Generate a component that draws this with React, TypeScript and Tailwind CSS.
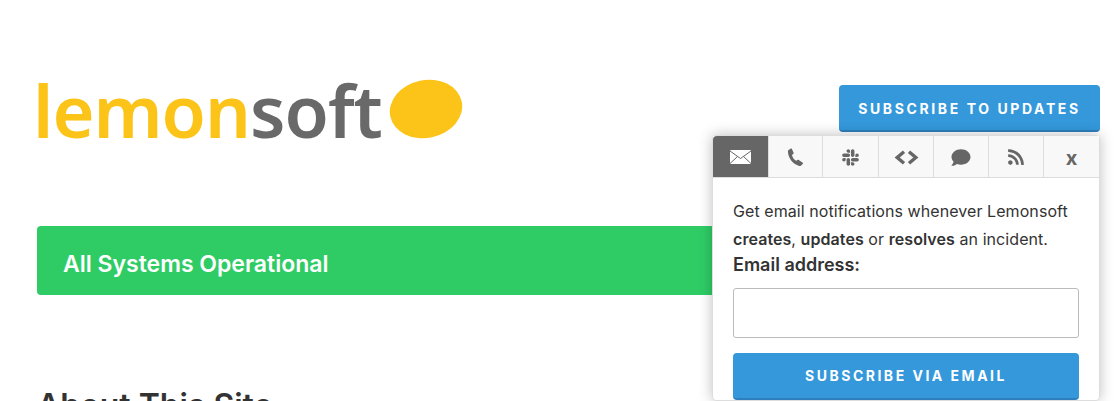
import { FaComment, FaRss, FaSlack } from "react-icons/fa";

const body = "font-['Inter','Liberation_Sans',sans-serif]";

function MailIcon() {
  return (
    <svg width="21" height="14" viewBox="0 0 21 14">
      <rect width="21" height="14" rx="1" fill="#fff" />
      <path d="M0 1l10.5 7.5L21 1M0 13.5l7.5-7M21 13.5l-7.5-7" fill="none" stroke="#666" strokeWidth="1" />
    </svg>
  );
}

function PhoneIcon() {
  return (
    <svg width="17" height="18" viewBox="0 0 17 18">
      <path d="M1 2.5L3.8.6c.4-.3.8-.2 1 .2l1.8 4c.2.4.1.7-.2 1L5 7c.5 2.6 2 4.6 4.2 5.8l1.6-1c.3-.2.7-.2 1 .1l4 2.8c.4.3.4.7.1 1l-2 2c-.3.3-1 .4-1.7.2C6 16.400.4 9.500 1 2.500z" fill="#666" />
    </svg>
  );
}

function CodeIcon() {
  return (
    <svg width="25" height="15" viewBox="0 0 25 15">
      <path d="M10 1.800L3.200 7.500 10 13.200M15 1.800l6.800 5.700L15 13.200" fill="none" stroke="#666" strokeWidth="3.400" />
    </svg>
  );
}

const tabs = [
  { key: "mail", width: "w-[55px]", node: <MailIcon /> },
  { key: "phone", width: "w-[54px]", node: <PhoneIcon /> },
  { key: "slack", width: "w-[56px]", node: <FaSlack className="h-[19px] w-[19px] text-[#666]" /> },
  { key: "code", width: "w-[55px]", node: <CodeIcon /> },
  { key: "chat", width: "w-[55px]", node: <FaComment className="h-[19px] w-[20px] text-[#666]" /> },
  { key: "rss", width: "w-[55px]", node: <FaRss className="h-[18px] w-[18px] text-[#666]" /> },
];

export default function App() {
  return (
    <div className={`relative h-[401px] w-[1117px] overflow-hidden bg-white ${body} text-[#333]`}>
      <div className="pl-[37px] pr-[17px] pt-[85px]">
        <div className="flex h-[47px] items-start justify-between">
          <div className="-ml-[4px] -mt-[23px] flex items-center">
            <span className="font-['Noto_Sans',sans-serif] text-[72px] font-semibold leading-[96px] tracking-[-1px] text-[#fcc419]">
              lemon<span className="text-[#696969]">soft</span>
            </span>
            <svg className="ml-[7px] -mt-[2px]" width="74" height="62" viewBox="0 0 74 62">
              <ellipse cx="37" cy="31" rx="36.500" ry="29" transform="rotate(-12 37 31)" fill="#fcc419" />
            </svg>
          </div>
          <button className="h-[47px] w-[261px] rounded-[4px] border-b-2 border-[#2d7fbd] bg-[#3498db] pt-[1px] text-[14px] font-bold uppercase tracking-[2.6px] text-white">
            Subscribe to Updates
          </button>
        </div>
        <div className="mt-[94px] flex h-[69px] items-center rounded-[4px] bg-[#2fcc66] pl-[26px] pt-[7px] text-[23px] font-semibold text-white">
          All Systems Operational
        </div>
        <h2 className="mt-[93px] text-[32px] font-semibold leading-[36px] text-[#333]">About This Site</h2>
      </div>

      <div className="absolute left-[712px] top-[135px] w-[388px] rounded-[4px] border border-[#ddd] bg-white shadow-[0_0_14px_rgba(0,0,0,0.25)]">
        <div className="flex h-[42px] border-b border-[#ddd] bg-[#f8f8f8]">
          {tabs.map((tab, i) => (
            <div
              key={tab.key}
              className={`flex items-center justify-center pt-[1px] ${tab.width} ${i === 0 ? "rounded-tl-[4px] bg-[#666]" : "border-l border-[#ddd]"}`}
            >
              {tab.node}
            </div>
          ))}
          <div className="flex flex-1 items-center justify-center border-l border-[#ddd] pt-[3px] text-[20px] font-bold text-[#666]">
            x
          </div>
        </div>
        <div className="px-[20px] pt-[19px]">
          <p className="text-[16px] leading-[28px] tracking-[0.07px]">
            Get email notifications whenever Lemonsoft <b className="font-semibold">creates</b>, <b className="font-semibold">updates</b> or <b className="font-semibold">resolves</b> an incident.
          </p>
          <div className="mt-[1px] text-[18px] font-semibold leading-[22px]">Email address:</div>
          <div className="mt-[12px] h-[50px] rounded-[3px] border border-[#bbb] bg-white" />
          <button className="mt-[15px] h-[47px] w-full rounded-[4px] border-b-2 border-[#2d7fbd] bg-[#3498db] text-[14px] font-bold uppercase tracking-[2.5px] text-white">
            Subscribe via Email
          </button>
        </div>
      </div>
    </div>
  );
}
